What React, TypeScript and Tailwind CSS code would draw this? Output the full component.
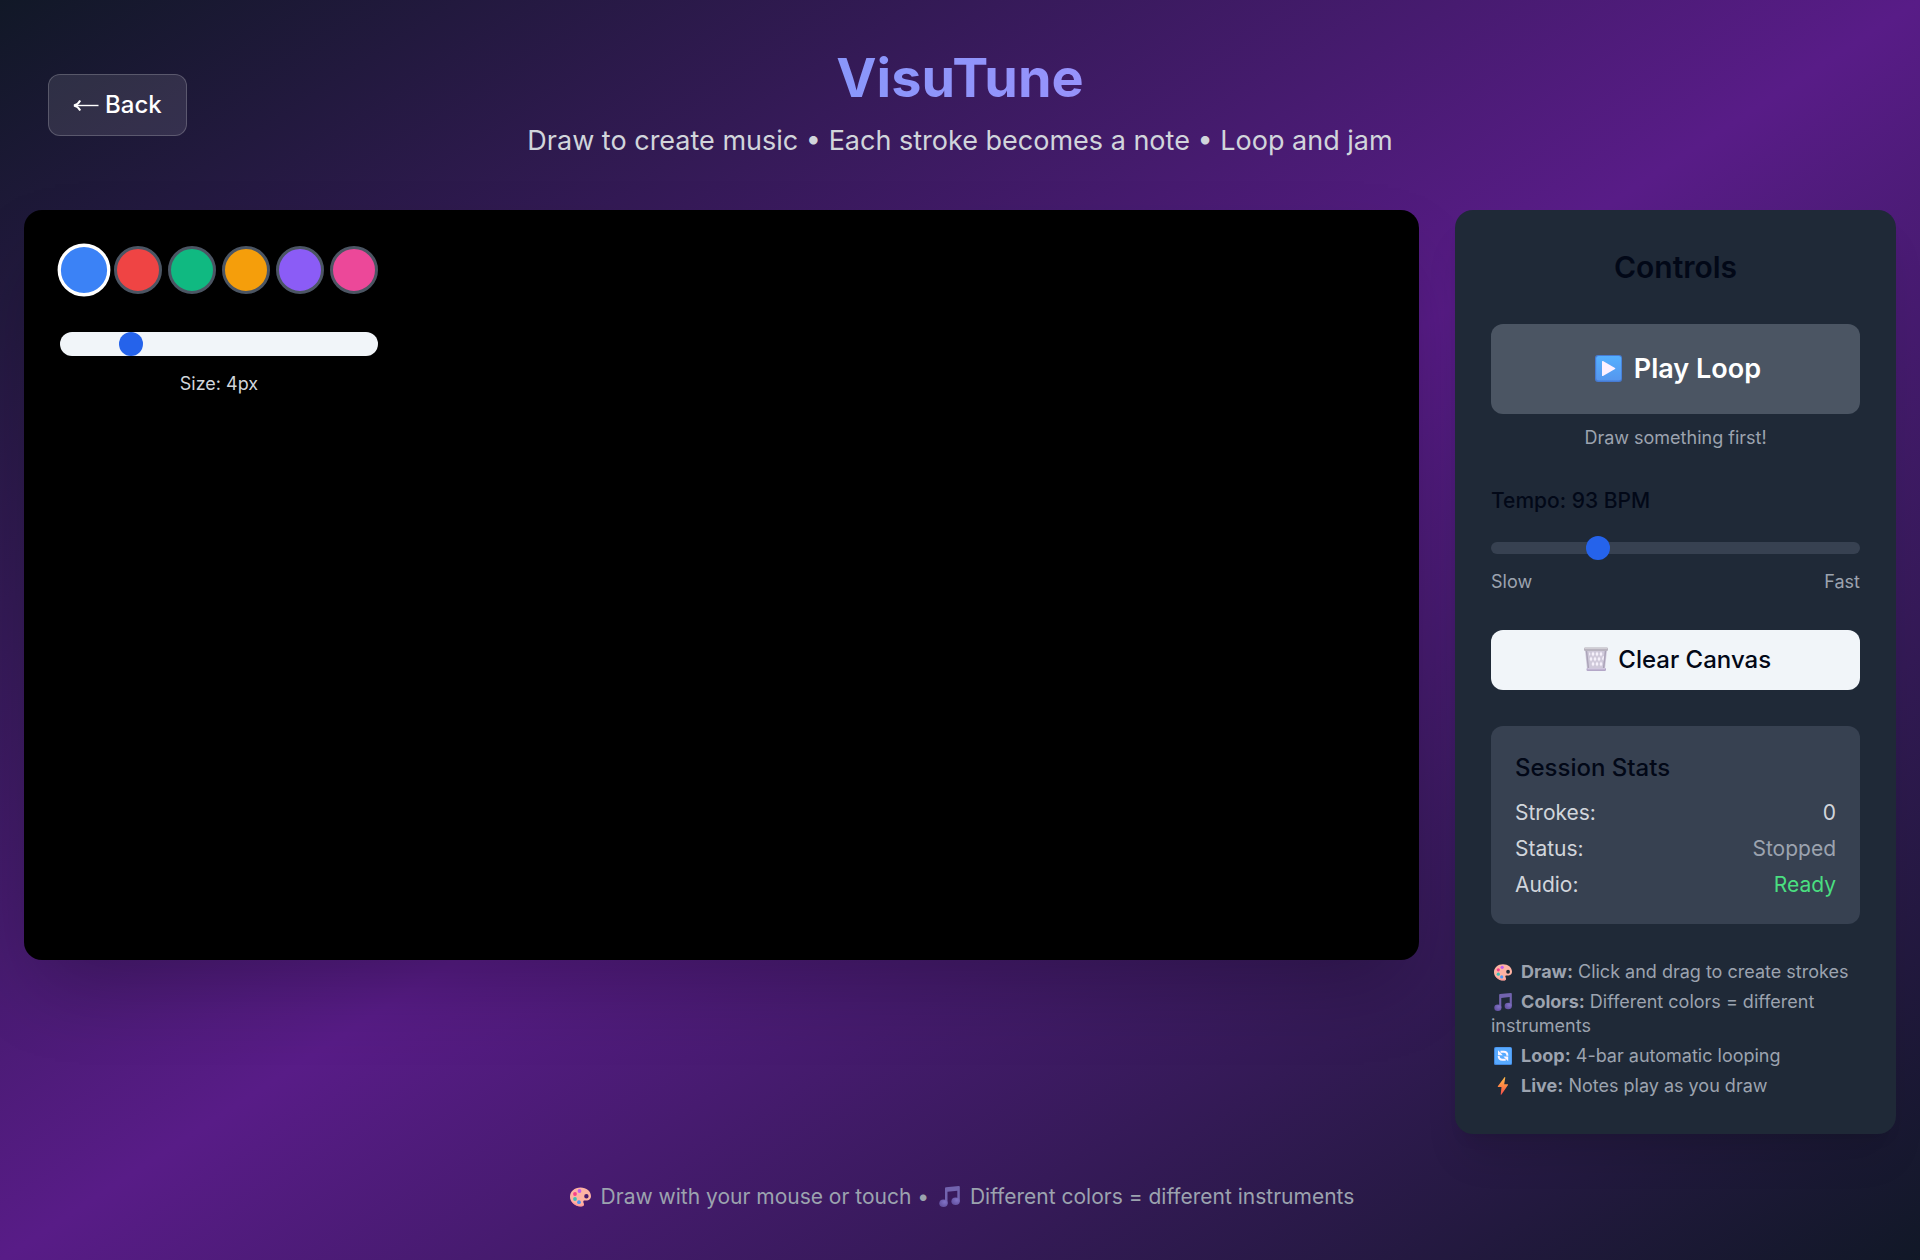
import { useState, type ReactNode } from 'react';

const COLORS = [
  { name: 'Blue', className: 'bg-[#3b82f6]' },
  { name: 'Red', className: 'bg-[#ef4444]' },
  { name: 'Green', className: 'bg-[#10b981]' },
  { name: 'Orange', className: 'bg-[#f59e0b]' },
  { name: 'Purple', className: 'bg-[#8b5cf6]' },
  { name: 'Pink', className: 'bg-[#ec4899]' },
];

const SMALL_ICON = 'mr-1 ml-[3px] inline-block size-[18px] align-[-3px]';
const FOOTER_ICON = 'mx-1 inline-block size-[21px] align-[-3px]';
const THUMB =
  '[&::-webkit-slider-thumb]:size-6 [&::-webkit-slider-thumb]:appearance-none [&::-webkit-slider-thumb]:rounded-full [&::-webkit-slider-thumb]:bg-[#2563eb]';

type IconProps = { className: string };

function ArrowIcon({ className }: IconProps) {
  return (
    <svg className={className} viewBox="0 0 26 18" fill="none" stroke="currentColor" strokeWidth="1.4" aria-hidden="true">
      <path d="M1 9.500H25.500" />
      <path d="M7.200 4.500Q5.200 8.500 1 9.500Q5.200 10.500 7.200 14.500" strokeWidth="1.900" />
    </svg>
  );
}

function PlayIcon({ className }: IconProps) {
  return (
    <svg className={className} viewBox="0 0 27 27" aria-hidden="true">
      <defs>
        <linearGradient id="play-face" x1="0" y1="0" x2="0" y2="1">
          <stop offset="0" stopColor="#55b0ff" />
          <stop offset="1" stopColor="#5596ee" />
        </linearGradient>
      </defs>
      <rect width="27" height="27" rx="3" fill="#467bd3" />
      <rect x="1.2" y="1" width="25" height="24.5" rx="2.5" fill="url(#play-face)" />
      <path d="M7 6.6Q7 5.6 8 6.1L20 12.9Q20.8 13.5 20 14.1L8 20.9Q7 21.4 7 20.4Z" fill="#fdf0ff" />
    </svg>
  );
}

function BasketIcon({ className }: IconProps) {
  return (
    <svg className={className} viewBox="0 0 24 24" aria-hidden="true">
      <path d="M1 3H23L21 22H3Z" fill="#cfc9da" />
      <g fill="#f5f1fb">
        <path d="M5 5l1.500 2L5.300 9ZM9 4.500l1.500 2.500L9 9.500 7.500 7ZM13 4.500l1.500 2.500L13 9.500 11.500 7ZM17 4.500l1.500 2.500L17 9.500 15.500 7Z" />
        <path d="M7 9.500l1.500 2.500L7 14.500 5.500 12ZM11 9.500l1.500 2.500-1.500 2.500L9.500 12ZM15 9.500l1.500 2.500-1.500 2.500L13.500 12ZM19 9l1 .5-.5 4.500-1.500-2Z" />
        <path d="M9 14.500l1.500 2.500L9 19.500 7.500 17ZM13 14.500l1.500 2.500-1.500 2.500-1.500-2.500ZM17 14.500l1.500 2.500-1.500 2.500-1.500-2.500Z" />
      </g>
      <path d="M2.500 4L4.500 22M21.500 4L19.500 22" stroke="#aba4b8" strokeWidth="1.500" />
      <rect x="0" y="0.500" width="24" height="3.500" rx="1.200" fill="#b8b3bf" />
      <rect x="0.500" y="0.500" width="23" height="1.500" rx="0.700" fill="#d0cdd4" />
      <rect x="2.500" y="21" width="19.500" height="3" rx="1.200" fill="#b4a7c8" />
      <rect x="3.500" y="21.300" width="17.500" height="1" fill="#ddd6e8" />
    </svg>
  );
}

function PaletteIcon({ className }: IconProps) {
  return (
    <svg className={className} viewBox="0 0 21 21" aria-hidden="true">
      <path
        fillRule="evenodd"
        fill="#ffb3a3"
        d="M10.500 1.500C4.500 1.500 0 5.500 0 10.800C0 16 5 20.500 11 20.500C13.200 20.500 14.300 19.600 14 18C13.700 16.600 12.800 15.800 13.500 14.900C14.200 14 15.500 14.900 17.200 14.500C19.600 14 21 12.600 21 10.200C21 5.200 16.500 1.500 10.500 1.500ZM16.400 8a2.200 2.200 0 1 1 0 4.400a2.200 2.200 0 1 1 0-4.400Z"
      />
      <path d="M1 14.500C3 18.500 7 20.500 11 20.500C13.200 20.500 14.300 19.600 14 18C11 20 5 18 1 14.500Z" fill="#ff8f92" opacity="0.600" />
      <circle cx="9.500" cy="5" r="1.900" fill="#c25cf0" />
      <circle cx="5" cy="8" r="1.900" fill="#f73f8b" />
      <circle cx="5" cy="13" r="1.900" fill="#3ebfb5" />
      <circle cx="9" cy="16.200" r="1.900" fill="#4b97f5" />
    </svg>
  );
}

function NoteIcon({ className, id }: IconProps & { id: string }) {
  return (
    <svg className={className} viewBox="0 0 21 21" aria-hidden="true">
      <defs>
        <radialGradient id={id} cx="0.650" cy="0.350" r="0.700">
          <stop offset="0" stopColor="#8172c6" />
          <stop offset="1" stopColor="#6351a0" />
        </radialGradient>
      </defs>
      <path d="M6 2.300Q6 1.300 7 1.200L19.800 0Q20.800 0 20.800 1V15.500H18.300V4.800L8.500 5.800V17.500H6Z" fill="#7263ae" />
      <ellipse cx="4.500" cy="17.200" rx="4.200" ry="3.800" fill={`url(#${id})`} />
      <ellipse cx="16.600" cy="15.200" rx="4.200" ry="3.800" fill={`url(#${id})`} />
    </svg>
  );
}

function LoopIcon({ className }: IconProps) {
  return (
    <svg className={className} viewBox="0 0 18 18" aria-hidden="true">
      <rect width="18" height="18" rx="1.500" fill="#4287dd" />
      <rect x="1" y="0.500" width="16.500" height="16.500" rx="1.500" fill="#58aaff" />
      <g fill="none" stroke="#fff6ff" strokeWidth="2">
        <path d="M6.500 4.800H9.800C12 4.800 13.400 6.200 13.400 8.800" />
        <path d="M11.700 12.800H8.500C6.200 12.800 4.700 11.400 4.700 9" />
      </g>
      <path d="M4 3.200V8.200H8.800ZM14.200 14.300V9.400H9.400Z" fill="#fff6ff" />
    </svg>
  );
}

function BoltIcon({ className }: IconProps) {
  return (
    <svg className={className} viewBox="0 0 18 18" aria-hidden="true">
      <defs>
        <linearGradient id="bolt-fill" x1="0" y1="0" x2="0" y2="1">
          <stop offset="0" stopColor="#ffbd4a" />
          <stop offset="0.500" stopColor="#ff8744" />
          <stop offset="1" stopColor="#f44c4b" />
        </linearGradient>
      </defs>
      <path d="M10.500 0.200L3.800 9.300Q3.500 9.900 4.200 9.900H7.500L6.700 17.400Q6.900 18 7.500 17.500L14 8Q14.300 7.200 13.500 7.200H10.200L11.300 0.600Q11.200 -0.200 10.500 0.200Z" fill="url(#bolt-fill)" />
    </svg>
  );
}

function StatRow({ label, children, valueClass = '' }: { label: string; children: ReactNode; valueClass?: string }) {
  return (
    <div className="flex justify-between">
      <dt>{label}</dt>
      <dd className={valueClass}>{children}</dd>
    </div>
  );
}

export default function App() {
  const [color, setColor] = useState(0);
  const [size, setSize] = useState(4);
  const [tempo, setTempo] = useState(93);

  return (
    <div className="min-h-screen bg-[linear-gradient(to_bottom_right,#111827,#581c87,#111827)] p-6 font-['Inter',sans-serif] text-[#020817]">
      <header className="mb-12 grid items-center px-6 pt-6">
        <div className="col-start-1 row-start-1 text-center">
          <h1 className="mb-3 bg-[linear-gradient(to_right,#60a5fa,#c084fc)] bg-clip-text text-[54px] leading-[60px] font-bold text-transparent">
            VisuTune
          </h1>
          <p className="text-[27px] leading-[42px] text-[#d1d5db]">
            Draw to create music • Each stroke becomes a note • Loop and jam
          </p>
        </div>
        <button
          type="button"
          className="col-start-1 row-start-1 flex items-center gap-1.5 justify-self-start rounded-xl border border-white/20 bg-white/10 px-6 py-3 text-2xl leading-9 font-medium text-white"
        >
          <ArrowIcon className="h-[18px] w-[26px]" />
          Back
        </button>
      </header>

      <main className="grid grid-cols-4 items-start gap-9">
        <section
          aria-label="Drawing canvas"
          className="col-span-3 h-[750px] rounded-[18px] bg-black p-9 shadow-[0_38px_75px_-18px_rgba(0,0,0,0.25)]"
        >
          <div className="flex w-fit flex-col">
            <div className="flex gap-1.5">
              {COLORS.map((c, i) => (
                <button
                  key={c.name}
                  type="button"
                  aria-label={c.name}
                  aria-pressed={i === color}
                  onClick={() => setColor(i)}
                  className={`size-12 rounded-full border-3 ${c.className} ${i === color ? 'scale-110 border-white' : 'border-[#4b5563]'}`}
                />
              ))}
            </div>
            <input
              id="brush-size"
              type="range"
              min={2}
              max={12}
              value={size}
              onChange={(e) => setSize(Number(e.target.value))}
              className={`mt-[38px] h-6 w-full appearance-none rounded-xl bg-[#f1f5f9] ${THUMB}`}
            />
            <label htmlFor="brush-size" className="mt-4 text-center text-lg leading-6 text-[#d1d5db]">
              Size: {size}px
            </label>
          </div>
        </section>

        <aside className="flex flex-col rounded-[18px] bg-[#1f2937] p-9 shadow-[0_30px_38px_-8px_rgba(0,0,0,0.1),0_12px_15px_-9px_rgba(0,0,0,0.1)]">
          <h2 className="mb-9 text-center text-3xl leading-[42px] font-semibold">Controls</h2>

          <button type="button" disabled className="h-[90px] rounded-xl bg-[#4b5563] text-[27px] leading-[42px] font-semibold text-white">
            <PlayIcon className="mx-[5px] inline-block size-[27px] align-[-4px]" /> Play Loop
          </button>
          <p className="mt-3 text-center text-lg leading-6 text-[#9ca3af]">Draw something first!</p>

          <label htmlFor="tempo" className="mt-9 text-[21px] leading-[30px] font-medium">
            Tempo: {tempo} BPM
          </label>
          <input
            id="tempo"
            type="range"
            min={60}
            max={180}
            value={tempo}
            onChange={(e) => setTempo(Number(e.target.value))}
            className={`mt-[26px] h-3 w-full appearance-none rounded-xl bg-[#374151] ${THUMB}`}
          />
          <div className="mt-4 flex justify-between text-lg leading-6 text-[#9ca3af]">
            <span>Slow</span>
            <span>Fast</span>
          </div>

          <button type="button" className="mt-9 h-[60px] rounded-xl bg-[#f1f5f9] text-2xl leading-9 font-medium">
            <BasketIcon className="mx-1 inline-block size-6 align-[-3px]" /> Clear Canvas
          </button>

          <section className="mt-9 rounded-xl bg-[#374151] p-6">
            <h3 className="mb-3 text-2xl leading-9 font-medium">Session Stats</h3>
            <dl className="flex flex-col gap-1.5 text-[21px] leading-[30px] text-[#d1d5db]">
              <StatRow label="Strokes:">0</StatRow>
              <StatRow label="Status:" valueClass="text-[#9ca3af]">Stopped</StatRow>
              <StatRow label="Audio:" valueClass="text-[#4ade80]">Ready</StatRow>
            </dl>
          </section>

          <div className="mt-9 flex flex-col gap-1.5 text-lg leading-6 text-[#9ca3af]">
            <p>
              <PaletteIcon className={SMALL_ICON} /> <strong>Draw:</strong> Click and drag to create strokes
            </p>
            <p>
              <NoteIcon id="note-panel" className={SMALL_ICON} /> <strong>Colors:</strong> Different colors = different instruments
            </p>
            <p>
              <LoopIcon className={SMALL_ICON} /> <strong>Loop:</strong> 4-bar automatic looping
            </p>
            <p>
              <BoltIcon className={SMALL_ICON} /> <strong>Live:</strong> Notes play as you draw
            </p>
          </div>
        </aside>
      </main>

      <footer className="mt-12 pb-6 text-center text-[21px] leading-[30px] text-[#9ca3af]">
        <PaletteIcon className={FOOTER_ICON} /> Draw with your mouse or touch •{' '}
        <NoteIcon id="note-footer" className={FOOTER_ICON} /> Different colors = different instruments
      </footer>
    </div>
  );
}
